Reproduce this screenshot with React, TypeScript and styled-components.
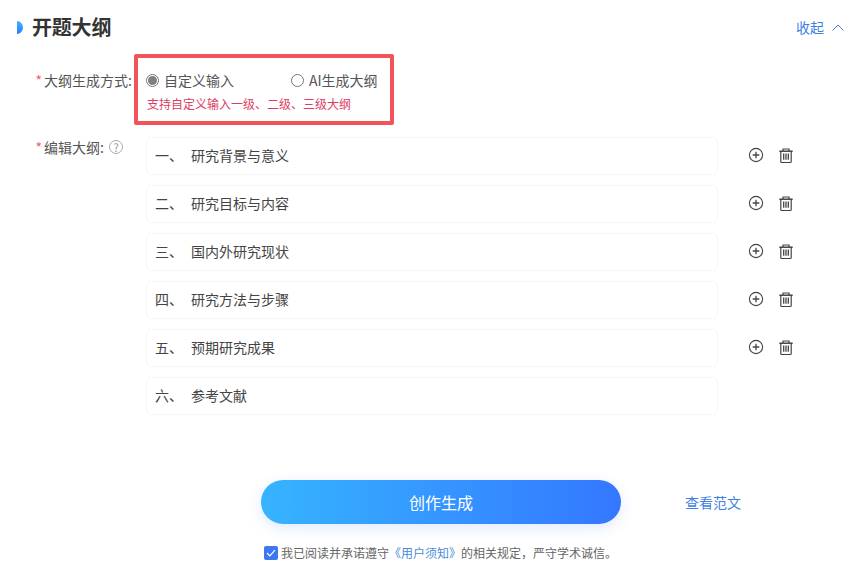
import React from "react";
import styled, { createGlobalStyle } from "styled-components";

const GlobalStyle = createGlobalStyle`
  html, body {
    margin: 0;
    padding: 0;
    background: #fff;
  }
  body {
    font-family: "Noto Sans CJK SC", "Liberation Sans", sans-serif;
  }
`;

const Page = styled.div`
  width: 862px;
  height: 580px;
  overflow: hidden;
  background: #fff;
  display: flex;
  flex-direction: column;
  color: #333;
`;

const Header = styled.div`
  height: 28px;
  margin-top: 13px;
  padding: 0 18px 0 17px;
  display: flex;
  align-items: center;
  justify-content: space-between;
`;

const TitleWrap = styled.div`
  display: flex;
  align-items: center;
  gap: 9px;
`;

const TitleMark = styled.span`
  width: 6px;
  height: 13px;
  margin-top: 1px;
  border-radius: 0 6px 6px 0 / 0 6.5px 6.5px 0;
  background: linear-gradient(180deg, #38b6ff, #2f7cf6);
`;

const Title = styled.h2`
  margin: 0;
  font-size: 20px;
  line-height: 28px;
  font-weight: 700;
  letter-spacing: -0.2px;
  color: #333;
`;

const Collapse = styled.a`
  display: flex;
  align-items: center;
  gap: 8px;
  font-size: 14px;
  color: #3f7fe4;
`;

const FormRow = styled.div<{ $top: number }>`
  display: flex;
  align-items: flex-start;
  margin-top: ${(p) => p.$top}px;
`;

const Label = styled.div<{ $top: number }>`
  width: 132px;
  flex: none;
  margin-top: ${(p) => p.$top}px;
  display: flex;
  justify-content: flex-end;
  align-items: center;
  height: 22px;
  font-size: 14px;
  line-height: 22px;
  color: #555;
  white-space: nowrap;
`;

const Star = styled.span`
  color: #f0616a;
  margin-right: 2px;
`;

const HelpIcon = styled.span`
  width: 14px;
  height: 14px;
  margin: 0 9px 0 5px;
  border: 1px solid #aaa;
  border-radius: 50%;
  box-sizing: border-box;
  display: flex;
  align-items: center;
  justify-content: center;
  font-size: 11px;
  line-height: 1;
  color: #999;
`;

const ModeBox = styled.div`
  width: 260px;
  height: 71px;
  margin-left: 2px;
  padding: 11px 8px 0;
  box-sizing: border-box;
  border: 4px solid #f0535a;
  border-radius: 2px;
`;

const RadioRow = styled.div`
  display: flex;
  height: 22px;
  align-items: center;
`;

const RadioOption = styled.label<{ $width: number }>`
  display: flex;
  align-items: center;
  gap: 5px;
  width: ${(p) => p.$width}px;
  font-size: 14px;
  color: #555;
  white-space: nowrap;
`;

const RadioDot = styled.span<{ $checked?: boolean }>`
  width: 13px;
  height: 13px;
  flex: none;
  box-sizing: border-box;
  border: 1px solid #777;
  border-radius: 50%;
  background: #fff;
  display: flex;
  align-items: center;
  justify-content: center;

  &::after {
    content: "";
    display: ${(p) => (p.$checked ? "block" : "none")};
    width: 9px;
    height: 9px;
    border-radius: 50%;
    background: #808080;
  }
`;

const Hint = styled.div`
  margin-top: 4px;
  margin-left: 1px;
  font-size: 12px;
  line-height: 18px;
  color: #dc3d63;
  white-space: nowrap;
`;

const OutlineList = styled.div`
  display: flex;
  flex-direction: column;
  gap: 10px;
  margin-left: 14px;
`;

const OutlineRow = styled.div`
  display: flex;
  align-items: center;
`;

const OutlineInput = styled.div`
  width: 572px;
  height: 38px;
  box-sizing: border-box;
  padding: 0 9px 2px 8px;
  border: 1px solid #f6f6f6;
  border-radius: 6px;
  display: flex;
  align-items: center;
  font-size: 14px;
  color: #444;
`;

const Num = styled.span`
  width: 36px;
  flex: none;
`;

const Actions = styled.div`
  display: flex;
  align-items: center;
  gap: 15px;
  margin: -2px 0 0 30px;
  color: #444;
`;

const IconBtn = styled.button`
  padding: 0;
  border: 0;
  background: none;
  color: inherit;
  display: flex;
`;

const SubmitRow = styled.div`
  display: flex;
  align-items: center;
  margin-top: 65px;
  padding-left: 261px;
`;

const SubmitButton = styled.button`
  width: 360px;
  height: 44px;
  border: 0;
  border-radius: 22px;
  background: linear-gradient(90deg, #36b4ff, #3477ff);
  box-shadow: 0 4px 14px rgba(60, 120, 255, 0.16);
  color: #fff;
  font-family: inherit;
  font-size: 16px;
`;

const SampleLink = styled.a`
  margin-left: 64px;
  font-size: 14px;
  color: #3f7fe4;
`;

const Agreement = styled.div`
  display: flex;
  align-items: center;
  gap: 3px;
  margin-top: 20px;
  padding-left: 264px;
  font-size: 12px;
  line-height: 18px;
  color: #666;
  white-space: nowrap;
`;

const CheckBox = styled.span`
  width: 14px;
  height: 14px;
  flex: none;
  border-radius: 2px;
  background: #3d78f2;
  display: flex;
  align-items: center;
  justify-content: center;
`;

const AgreementLink = styled.a`
  color: #4a8ad8;
`;

const PlusCircle = () => (
  <svg width="16" height="16" viewBox="0 0 16 16" fill="none" stroke="currentColor" strokeWidth="1.1">
    <circle cx="8" cy="8" r="6.6" />
    <path d="M8 4.7v6.6M4.7 8h6.6" strokeWidth="1.3" />
  </svg>
);

const Trash = () => (
  <svg width="14" height="15" viewBox="0 0 14 15" fill="none" stroke="currentColor" strokeWidth="1.2">
    <path d="M.3 3.2h13.4" strokeWidth="1.5" />
    <path d="M4 3V1h6v2" />
    <path d="M1.8 3v10.4c0 .7.5 1.1 1.1 1.1h8.2c.6 0 1.1-.4 1.1-1.1V3" />
    <path d="M4.7 5.6v6.2M7 5.6v6.2M9.3 5.6v6.2" strokeWidth="1.3" />
  </svg>
);

const outline = [
  ["一、", "研究背景与意义"],
  ["二、", "研究目标与内容"],
  ["三、", "国内外研究现状"],
  ["四、", "研究方法与步骤"],
  ["五、", "预期研究成果"],
  ["六、", "参考文献"],
];

export default function App() {
  return (
    <Page>
      <GlobalStyle />
      <Header>
        <TitleWrap>
          <TitleMark />
          <Title>开题大纲</Title>
        </TitleWrap>
        <Collapse>
          收起
          <svg width="12" height="7" viewBox="0 0 12 7" fill="none" stroke="currentColor" strokeWidth="1">
            <path d="M.6 6.4 6 1l5.4 5.4" />
          </svg>
        </Collapse>
      </Header>

      <FormRow $top={13}>
        <Label $top={15}>
          <Star>*</Star>大纲生成方式:
        </Label>
        <ModeBox>
          <RadioRow>
            <RadioOption $width={145}>
              <RadioDot $checked />
              自定义输入
            </RadioOption>
            <RadioOption $width={90}>
              <RadioDot />
              AI生成大纲
            </RadioOption>
          </RadioRow>
          <Hint>支持自定义输入一级、二级、三级大纲</Hint>
        </ModeBox>
      </FormRow>

      <FormRow $top={12}>
        <Label $top={-1}>
          <Star>*</Star>编辑大纲:
          <HelpIcon>?</HelpIcon>
        </Label>
        <OutlineList>
          {outline.map(([num, text], i) => (
            <OutlineRow key={num}>
              <OutlineInput>
                <Num>{num}</Num>
                {text}
              </OutlineInput>
              {i < outline.length - 1 && (
                <Actions>
                  <IconBtn>
                    <PlusCircle />
                  </IconBtn>
                  <IconBtn>
                    <Trash />
                  </IconBtn>
                </Actions>
              )}
            </OutlineRow>
          ))}
        </OutlineList>
      </FormRow>

      <SubmitRow>
        <SubmitButton>创作生成</SubmitButton>
        <SampleLink>查看范文</SampleLink>
      </SubmitRow>

      <Agreement>
        <CheckBox>
          <svg width="10" height="8" viewBox="0 0 10 8" fill="none" stroke="#fff" strokeWidth="1.2">
            <path d="M1 4l2.8 2.8L9 1.2" />
          </svg>
        </CheckBox>
        <span>
          我已阅读并承诺遵守<AgreementLink>《用户须知》</AgreementLink>的相关规定，严守学术诚信。
        </span>
      </Agreement>
    </Page>
  );
}
